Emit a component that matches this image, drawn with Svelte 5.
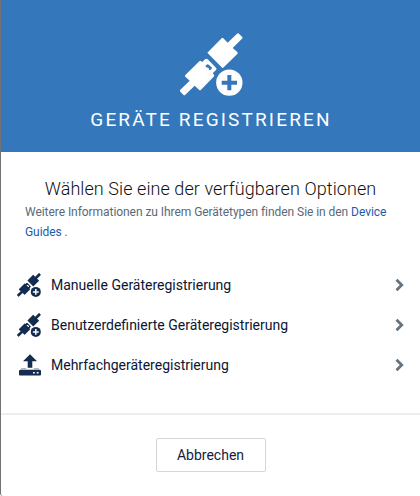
<script>
  const options = [
    { label: 'Manuelle Geräteregistrierung', icon: 'plug' },
    { label: 'Benutzerdefinierte Geräteregistrierung', icon: 'plug' },
    { label: 'Mehrfachgeräteregistrierung', icon: 'upload' }
  ];
</script>

{#snippet plug()}
  <svg class="plug" viewBox="29 25 189 189" aria-hidden="true">
    <path d="M111 84 154 41Q156 38 159 41L172 54 200 27Q203 24 206 27L215 36Q218 39 215 42L187 70 201 82Q203 85 201 88L157 131Z" />
    <path fill-rule="evenodd" d="M45 151 87 110Q90 107 93 110L96 112 104 104Q108 100 112 104L137 129Q140 132 137 136L127 146 131 150Q133 153 130 156L92 195Q89 198 86 195L73 183 45 210Q42 213 39 210L30 201Q27 198 30 195L58 168 45 156Q43 154 45 151ZM106 123 109 120Q112 118 115 120L123 127Q126 130 124 132L121 135Q119 137 116 135L115 130 106 127Z" />
    <circle class="gap" cx="177" cy="174" r="43" />
    <circle cx="177" cy="174" r="39.5" />
    <path class="plus" d="M171 151h12v17h17v12h-17v17h-12v-17h-17v-12h17z" />
  </svg>
{/snippet}

<main>
  <header>
    {@render plug()}
    <h1>GERÄTE REGISTRIEREN</h1>
  </header>
  <section class="intro">
    <h2>Wählen Sie eine der verfügbaren Optionen</h2>
    <p>Weitere Informationen zu Ihrem Gerätetypen finden Sie in den <a href="#guides">Device<br />Guides</a> .</p>
  </section>
  <div class="options">
    {#each options as option}
      <button class="option">
        <span class="icon">
          {#if option.icon === 'plug'}
            {@render plug()}
          {:else}
            <svg class="upload" viewBox="0 0 24 24" aria-hidden="true">
              <path d="M13 1.200 20 8.200h-4.700V14.800H10.700V8.200H6z" />
              <path d="M4.500 15H9.200V16.200H16.800V15H21.500L23.500 17.200H2.500z" opacity=".35" />
              <path fill-rule="evenodd" d="M3 17H23.200Q24 17 24 17.800V21.500Q24 22.500 23 22.500H3Q2 22.500 2 21.500V18Q2 17 3 17ZM16 19v1.500h1.800V19zM19.700 19v1.500h1.800V19z" />
            </svg>
          {/if}
        </span>
        <span class="label">{option.label}</span>
        <svg class="chevron" viewBox="0 0 10 14" aria-hidden="true"><path d="M1.500 1.800l5.200 5.200-5.200 5.200" /></svg>
      </button>
    {/each}
  </div>
  <footer><button class="cancel">Abbrechen</button></footer>
</main>

<style>
  :global(body) { margin: 0; background: #fff; }
  main {
    box-sizing: border-box;
    width: 420px;
    height: 496px;
    display: flex;
    flex-direction: column;
    overflow: hidden;
    background: #fff;
    border-left: 1px solid #707173;
    border-bottom-left-radius: 3px;
    font-family: Roboto, sans-serif;
    color: #14213d;
  }
  header {
    --surface: #3477ba;
    height: 152px;
    box-sizing: border-box;
    padding-top: 33px;
    display: flex;
    flex-direction: column;
    align-items: center;
    background: var(--surface);
    color: #fff;
  }
  .plug { display: block; width: 24px; height: 24px; fill: currentColor; }
  .plug .gap, .plug .plus { fill: var(--surface, #fff); }
  header .plug { width: 63px; height: 63px; margin-left: 1px; }
  h1 {
    margin: 12px 0 0;
    font-size: 19px;
    line-height: 24px;
    font-weight: 400;
    letter-spacing: 2.150px;
    padding-left: 1px;
    white-space: nowrap;
  }
  .intro { padding: 24px 24px 0; height: 113px; box-sizing: border-box; }
  h2 {
    margin: 0;
    text-align: center;
    font-size: 18px;
    line-height: 26px;
    font-weight: 300;
    letter-spacing: 0.080px;
    color: #111;
    white-space: nowrap;
  }
  p { margin: 0; font-size: 12px; line-height: 20px; letter-spacing: -0.055px; color: #586a78; white-space: nowrap; }
  a { color: #1a5cab; text-decoration: none; }
  .options { display: flex; flex-direction: column; height: 148px; }
  button { font-family: inherit; cursor: pointer; }
  .option {
    display: flex;
    align-items: center;
    height: 40px;
    padding: 0 15px 0 16px;
    border: 0;
    background: none;
    color: #142c50;
    text-align: left;
  }
  .icon { width: 34px; display: flex; }
  .upload { width: 24px; height: 24px; fill: currentColor; }
  .label { flex: 1; font-size: 14px; color: #0b1634; white-space: nowrap; }
  .chevron { width: 10px; height: 14px; fill: none; stroke: #64737f; stroke-width: 2.800; }
  footer {
    flex: 1;
    display: flex;
    justify-content: center;
    align-items: flex-start;
    border-top: 2px solid #eee;
    padding-top: 23px;
  }
  .cancel {
    width: 110px;
    height: 34px;
    padding: 0;
    border: 1px solid #d4d6d8;
    border-radius: 2px;
    background: #fff;
    color: #14213d;
    font-size: 14px;
  }
</style>
